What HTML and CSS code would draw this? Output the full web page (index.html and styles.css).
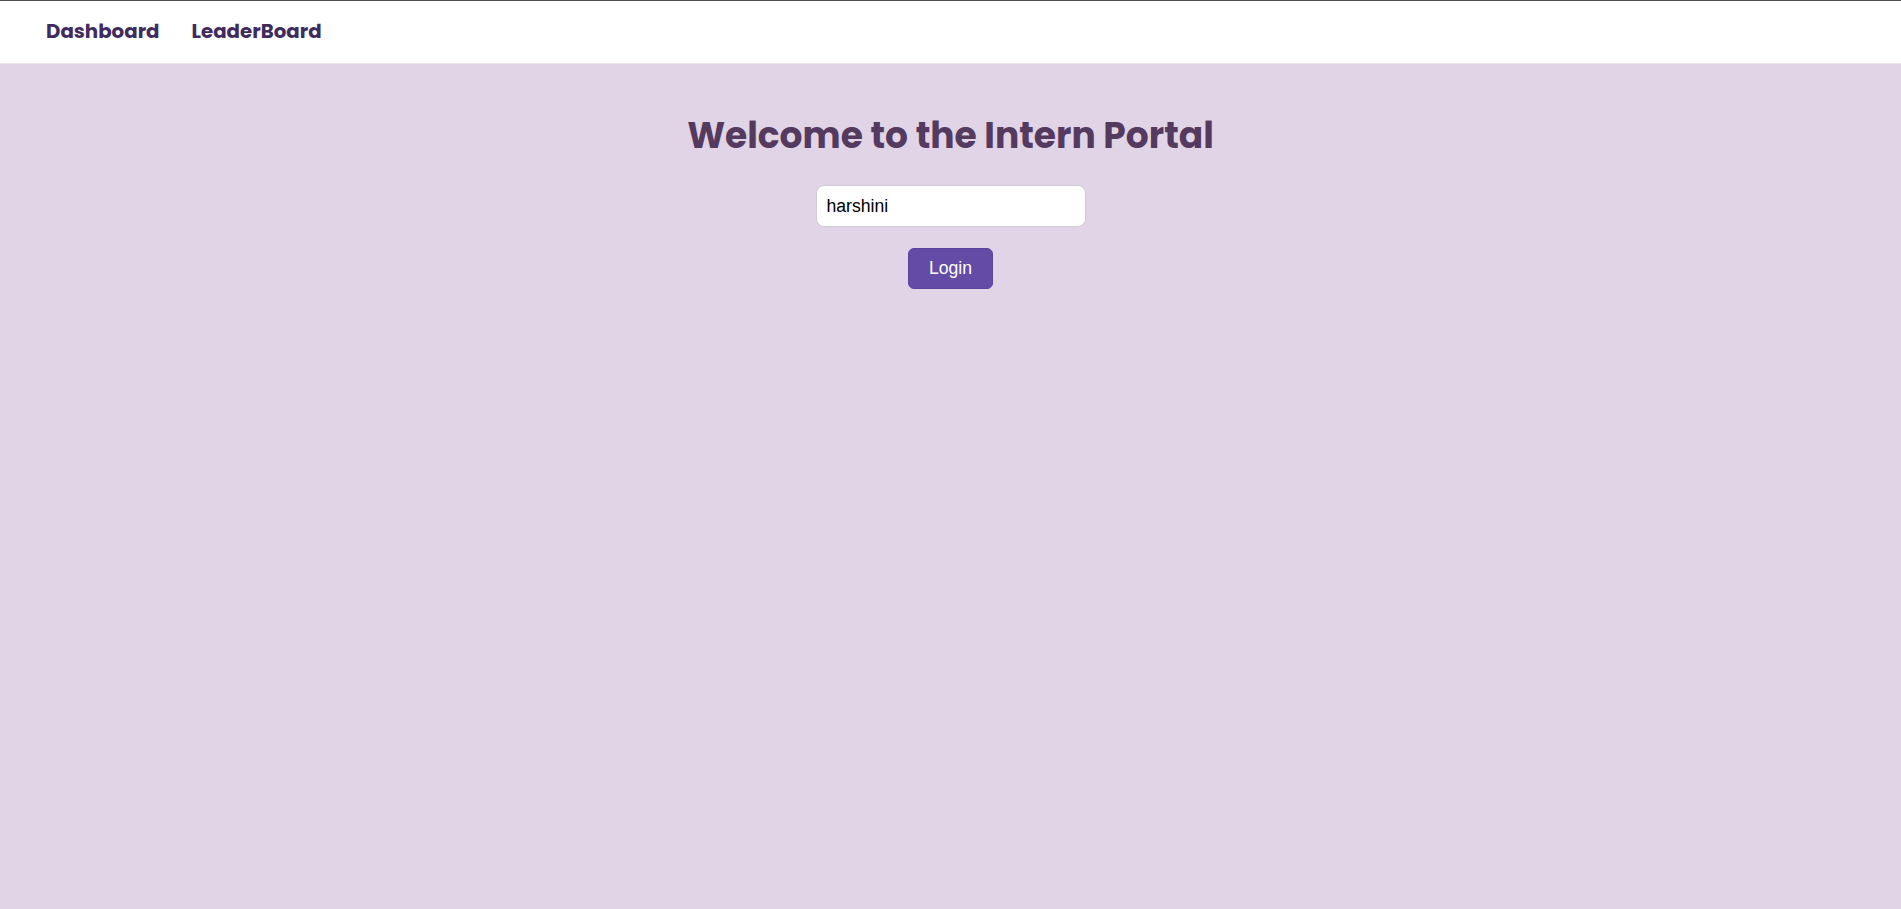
FILE: index.html
```html
<!DOCTYPE html>
<html lang="en">
<head>
<meta charset="utf-8">
<title>Intern Portal</title>
<link rel="stylesheet" href="styles.css">
</head>
<body>
<nav class="topnav">
  <a class="navlink" href="#">Dashboard</a>
  <a class="navlink" href="#">LeaderBoard</a>
</nav>
<main class="login">
  <h1 class="title">Welcome to the Intern Portal</h1>
  <input class="name-input" type="text" value="harshini">
  <button class="login-btn" type="button">Login</button>
</main>
</body>
</html>
```
FILE: styles.css
```css
html, body {
  margin: 0;
  padding: 0;
}
body {
  background: #e0d4e6;
  border-top: 1px solid #505050;
  min-height: 908px;
  font-family: "Liberation Sans", Arial, sans-serif;
}
.topnav {
  display: flex;
  align-items: center;
  gap: 32px;
  height: 60px;
  padding: 0 46px 2px;
  background: #ffffff;
  border-bottom: 1px solid #ebe4ee;
}
.navlink {
  font-family: "Poppins", "Open Sans", sans-serif;
  font-weight: 700;
  font-size: 19.8px;
  color: #402b5e;
  text-decoration: none;
}
.login {
  display: flex;
  flex-direction: column;
  align-items: center;
}
.title {
  margin: 50px 0 0;
  font-family: "Poppins", "Open Sans", sans-serif;
  font-weight: 700;
  font-size: 36px;
  line-height: 1.2;
  color: #553a5f;
}
.name-input {
  margin-top: 28px;
  box-sizing: border-box;
  width: 270px;
  height: 42px;
  padding: 0 10px;
  border: 1px solid #cfcad3;
  border-radius: 8px;
  background: #ffffff;
  font-family: "Liberation Sans", Arial, sans-serif;
  font-size: 17.6px;
  color: #000000;
  outline: none;
}
.login-btn {
  margin-top: 21px;
  box-sizing: border-box;
  width: 85px;
  height: 41px;
  padding: 0;
  border: 1px solid #5a43a0;
  border-radius: 6px;
  background: #644ca6;
  color: #ffffff;
  font-family: "Liberation Sans", Arial, sans-serif;
  font-size: 17.6px;
  cursor: pointer;
}
```
